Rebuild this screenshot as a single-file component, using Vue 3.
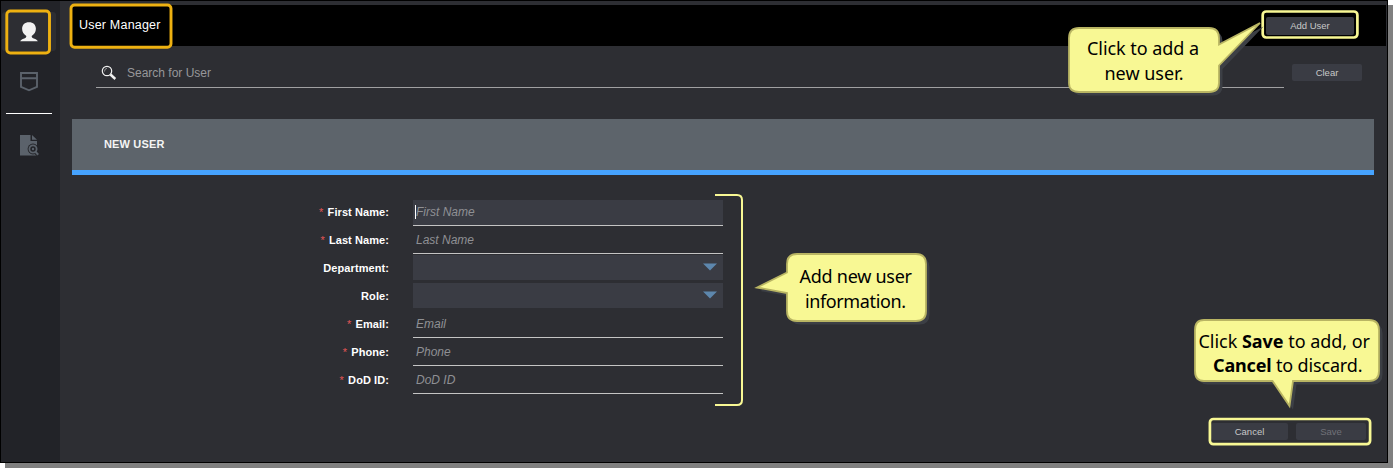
<script setup>
const fields = [
  { label: 'First Name', required: true, type: 'text', active: true },
  { label: 'Last Name', required: true, type: 'text' },
  { label: 'Department', type: 'select' },
  { label: 'Role', type: 'select' },
  { label: 'Email', required: true, type: 'text' },
  { label: 'Phone', required: true, type: 'text' },
  { label: 'DoD ID', required: true, type: 'text' },
]
</script>

<template>
  <div class="stage">
    <div class="window">
      <nav class="side">
        <div class="nav-item current">
          <svg width="18" height="20" viewBox="0 0 18 20"><path fill="#f2f2f2" d="M9 .3C4.700.3 2.100 3 2.100 6.800c0 3 1.700 5.600 4.200 7.200.1 1.300-.5 1.900-2 2.400C2 17.100.6 17.800.2 19.300h17.600c-.4-1.500-1.800-2.200-4.100-2.900-1.500-.5-2.100-1.100-2-2.400 2.500-1.600 4.200-4.200 4.200-7.200C15.900 3 13.300.3 9 .3z" /></svg>
        </div>
        <div class="nav-item badge">
          <svg width="18" height="20" viewBox="0 0 18 20"><path fill="none" stroke="#5b626b" stroke-width="1.900" d="M1 1h16v13.800L9 18.300 1 14.800zM1 6.200h16" /></svg>
        </div>
        <div class="rule"></div>
        <div class="nav-item report">
          <svg width="19" height="21" viewBox="0 0 19 21"><path fill="#5b626b" d="M0 0h10.500v6H17v14.500H0zM12 0l5 4.800h-5z" /><circle cx="13" cy="14" r="5.400" fill="#222328" /><path stroke="#222328" stroke-width="4" d="M15.500 17l3 3" /><circle cx="13" cy="14" r="3.600" fill="none" stroke="#5b626b" stroke-width="1.800" /><circle cx="13" cy="14" r="1.200" fill="#5b626b" /><path stroke="#5b626b" stroke-width="2" d="M15.200 16.500l3 3.200" /></svg>
        </div>
      </nav>

      <main class="main">
        <header class="bar">
          <h1>User Manager</h1>
          <button class="btn add">Add User</button>
        </header>
        <div class="search">
          <div class="search-box">
            <svg width="16" height="16" viewBox="0 0 16 16"><circle cx="6" cy="6" r="4.700" fill="none" stroke="#f0f0f0" stroke-width="1.200" /><path fill="none" stroke="#aaa" stroke-width=".8" d="M3.500 6.500A3 3 0 0 1 6 3.300" /><path stroke="#f0f0f0" stroke-width="2.400" d="M9.500 9.500l4.800 4.500" /></svg>
            <span>Search for User</span>
          </div>
          <button class="btn clear">Clear</button>
        </div>
        <h2 class="banner">NEW USER</h2>
        <form class="form">
          <div v-for="f in fields" :key="f.label" class="row">
            <label><i v-if="f.required">*</i> {{ f.label }}:</label>
            <div v-if="f.type === 'text'" class="input" :class="{ active: f.active }">
              <span v-if="f.active" class="caret"></span>{{ f.label }}
            </div>
            <div v-else class="select">
              <svg width="14" height="8" viewBox="0 0 14 8"><path fill="#5d87ad" d="M0 .5h14L7 7.500z" /></svg>
            </div>
          </div>
        </form>
        <footer class="actions">
          <button class="btn">Cancel</button>
          <button class="btn save">Save</button>
        </footer>
      </main>
    </div>

    <svg class="notes" width="1393" height="468" viewBox="0 0 1393 468">
      <g fill="none" stroke="#eeb111" stroke-width="2.900">
        <rect x="6.800" y="11" width="42.700" height="42" rx="3.500" />
        <rect x="71" y="5" width="100" height="42.300" rx="3.500" />
      </g>
      <g fill="none" stroke="#f8f894" stroke-width="2.700">
        <rect x="1262.700" y="11.500" width="94.700" height="26" rx="3.500" />
        <rect x="1209.900" y="419" width="160.200" height="25.200" rx="3.500" />
        <path stroke-width="2" d="M715 195h22q5 0 5 5v200q0 5-5 5h-22" />
      </g>
      <g fill="#3c3f45" transform="translate(3.500 3.500)">
        <path d="M1079 28h130q10 0 10 10v6.500L1260 23l-41 42.500V83q0 9-10 9h-130q-10 0-10-9V38q0-10 10-10z" />
        <path d="M797 254h119q10 0 10 10v47q0 10-10 10H797q-10 0-10-10v-18l-30-5.500 30-15V264q0-10 10-10z" />
        <path d="M1204 320h165q10 0 10 10v41q0 10-10 10h-76l-3.500 25-17-25H1204q-9 0-9-10v-41q0-10 9-10z" />
      </g>
      <g fill="#f8f894" stroke="#b9b563" stroke-width="1.800">
        <path d="M1079 28h130q10 0 10 10v6.500L1260 23l-41 42.500V83q0 9-10 9h-130q-10 0-10-9V38q0-10 10-10z" />
        <path d="M797 254h119q10 0 10 10v47q0 10-10 10H797q-10 0-10-10v-18l-30-5.500 30-15V264q0-10 10-10z" />
        <path d="M1204 320h165q10 0 10 10v41q0 10-10 10h-76l-3.500 25-17-25H1204q-9 0-9-10v-41q0-10 9-10z" />
      </g>
      <g class="note-text">
        <text x="1087" y="55" textLength="112">Click to add a</text>
        <text x="1104.500" y="80" textLength="79">new user.</text>
        <text x="799.500" y="283" textLength="112.500">Add new user</text>
        <text x="805" y="308" textLength="101">information.</text>
        <text x="1198.500" y="348" textLength="171.500">Click <tspan>Save</tspan> to add, or</text>
        <text x="1213" y="372" textLength="149.500"><tspan>Cancel</tspan> to discard.</text>
      </g>
    </svg>
  </div>
</template>

<style>
body { background: #fff; overflow: hidden; }
</style>

<style scoped>
* { box-sizing: border-box; }
.stage { position: relative; width: 1393px; height: 468px; overflow: hidden; font-family: "Liberation Sans", Arial, sans-serif; }
.window { display: flex; width: 1388px; height: 463px; background: #2d2e33; border: 1px solid #000; box-shadow: 5px 5px 0 #808080; }
.side { width: 59px; padding-top: 11px; background: #222328; }
.nav-item { display: flex; justify-content: center; align-items: center; height: 39px; width: 54px; margin-left: 1px; border-radius: 3px; }
.nav-item.current { background: #2d2e33; }
.nav-item.badge { margin-top: 11px; }
.nav-item.badge svg { margin-right: 1px; }
.nav-item svg { display: block; }
.nav-item.current svg { margin-right: 1px; }
.rule { height: 1px; width: 46px; margin: 12px 0 0 5px; background: #fff; }
.nav-item.report { margin-top: 12px; }
.main { flex: 1; display: flex; flex-direction: column; min-width: 0; }
.bar { flex: none; display: flex; justify-content: space-between; align-items: flex-start; height: 41px; margin: 4px 1px 0 12px; padding: 12px 32px 0 7px; background: #000; }
h1 { margin: 0; font-size: 12.500px; line-height: 16px; font-weight: 400; letter-spacing: .2px; color: #fff; }
.btn { display: block; border: 0; padding: 0; height: 18px; border-radius: 2px; background: #3a3c44; color: #c8c8c8; font: 9.500px/18px "Liberation Sans", Arial, sans-serif; text-align: center; }
.add { width: 88px; }
.search { flex: none; display: flex; margin: 10px 25px 0 36px; height: 32px; gap: 8px; }
.search-box { display: flex; align-items: center; flex: 1; padding: 2px 0 0 5px; border-bottom: 1px solid #a0a0a2; font-size: 12px; color: #97979a; }
.search-box svg { margin-right: 10px; }
.clear { width: 70px; margin-top: 8px; height: 17px; line-height: 17px; }
.banner { flex: none; height: 56px; margin: 31px 13px 0 12px; padding-left: 32px; background: #5d646b; border-bottom: 5px solid #46a3ff; font-size: 11px; letter-spacing: .15px; line-height: 51px; color: #f4f4f4; }
.form { flex: none; margin: 25px 0 0 212px; }
.row { display: flex; height: 28px; }
label { width: 117px; margin-right: 24px; text-align: right; font-size: 11px; letter-spacing: .08px; line-height: 25px; font-weight: 700; color: #fff; }
label i { font-style: normal; font-weight: 400; color: #e25555; margin-right: 1px; }
.input { position: relative; width: 310px; height: 26px; padding-left: 3px; border-bottom: 1px solid #c4c4c4; font-size: 12px; line-height: 24px; font-style: italic; color: #8f9094; }
.input.active { background: #3a3c44; }
.caret { position: absolute; left: 2px; top: 5px; width: 1px; height: 14px; background: #fff; }
.select { display: flex; justify-content: flex-end; align-items: center; width: 310px; height: 25px; margin-top: -1px; padding: 0 6px 1px 0; background: #3a3c44; }
.actions { display: flex; justify-content: flex-end; gap: 8px; margin: 27px 21px 0 0; }
.actions .btn { width: 77px; height: 17px; }
.actions .save { width: 70px; color: #707178; }
.notes { position: absolute; left: 0; top: 0; }
.note-text { font: 18px "Noto Sans", "Open Sans", sans-serif; fill: #000; }
.note-text tspan { font-weight: 700; }
</style>
